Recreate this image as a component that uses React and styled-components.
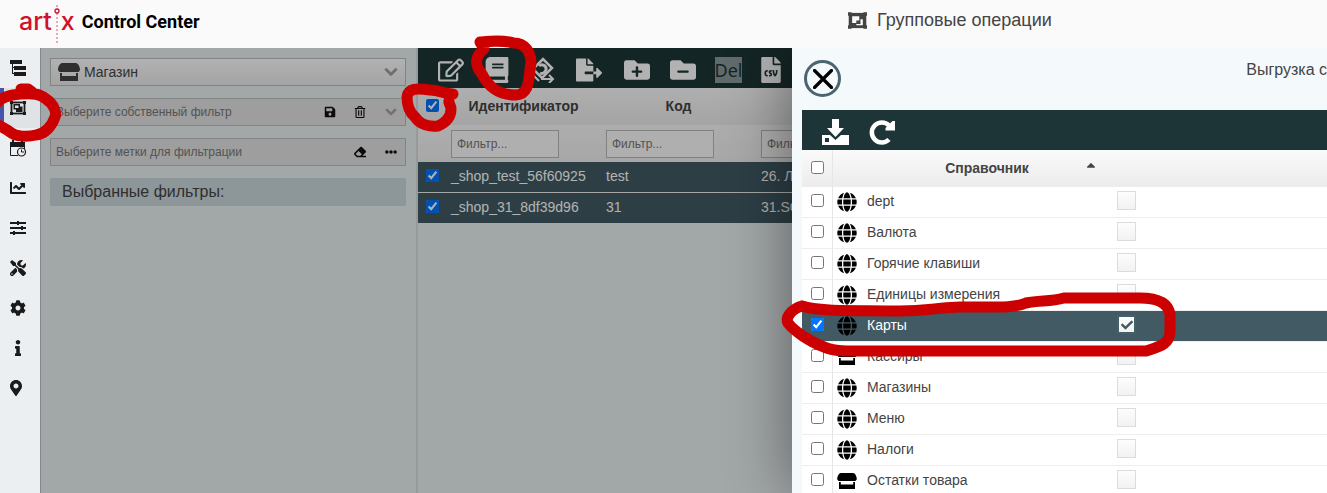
import React from "react";
import styled, { createGlobalStyle, css } from "styled-components";
import {
  FaChartLine, FaTools, FaCog, FaInfo, FaMapMarkerAlt, FaSave, FaRegTrashAlt, FaEraser, FaEllipsisH,
  FaRegEdit, FaBook, FaFileExport, FaFolderPlus, FaFolderMinus, FaFileCsv, FaChevronDown, FaGlobe,
  FaCheck, FaCaretUp,
} from "react-icons/fa";

const Global = createGlobalStyle`
  *, *::before, *::after { box-sizing: border-box; }
  body { margin: 0; overflow: hidden; font-family: "Liberation Sans", Arial, sans-serif; font-size: 14px; color: #444; }
  button, input, select { font: inherit; color: inherit; }
`;

/* ---------- icons ---------- */

const Tree = () => (
  <svg width="16" height="16" viewBox="0 0 16 16" aria-hidden="true">
    <path fill="#1a1a1a" d="M0 0h12v4H3v3h1V6h12v4H4V8H3v5h1v-1h12v4H4v-2H2V4H0z" />
  </svg>
);

const ObjectGroup = ({ size = 16, color = "#1a1a1a", hole = "#eceff1", solid }) => (
  <svg width={size} height={size - 2} viewBox="0 0 16 14" aria-hidden="true">
    <rect x="1.500" y="1.500" width="13" height="11" fill={solid ? color : "none"} stroke={color} strokeWidth="1.800" />
    <path fill={color} d="M0 0h3v3H0zM13 0h3v3h-3zM0 11h3v3H0zM13 11h3v3h-3z" />
    {solid ? (
      <path fill={hole} d="M3.500 3.500h6v3.500H7v2H3.500zM10.500 6h2v5H7v-1h3.500z" />
    ) : (
      <path fill={color} fillRule="evenodd" d="M3.500 3h6.500v2.500h2.500V11H6V8.500H3.500zM5 4.500V7h3.500V4.500z" />
    )}
  </svg>
);

const CalendarClock = () => (
  <svg width="16" height="17" viewBox="0 0 16 17" aria-hidden="true">
    <path fill="#1a1a1a" d="M0 2h2V0h2v2h7V0h2v2h2v5H0z" />
    <path fill="none" stroke="#1a1a1a" d="M.5 6v9.500H8M14.500 6v3" />
    <circle cx="11.500" cy="12" r="4" fill="#eceff1" stroke="#1a1a1a" strokeWidth="1.200" />
    <path fill="none" stroke="#1a1a1a" d="M11.500 9.500V12H14" />
  </svg>
);

const Sliders = () => (
  <svg width="16" height="14" viewBox="0 0 16 14" aria-hidden="true">
    <path stroke="#1a1a1a" strokeWidth="2" d="M0 2h16M0 7h16M0 12h16" />
    <path stroke="#1a1a1a" strokeWidth="2" d="M8 0v4M12 5v4M4 10v4" />
  </svg>
);

const Store = ({ width = 22, color = "#000" }) => (
  <svg width={width} height={Math.round(width * 0.82)} viewBox="0 0 22 18" aria-hidden="true">
    <path fill={color} d="M4 0h14c2 0 4 4 4 6.500a2.500 2.500 0 0 1-3 2.500H3A2.500 2.500 0 0 1 0 6.500C0 4 2 0 4 0z" />
    <path fill={color} d="M2 10h2v3h14v-3h2v8H2z" />
  </svg>
);

const MoneyTransfer = () => (
  <svg width="26" height="26" viewBox="0 0 26 26" fill="none" stroke="currentColor" aria-hidden="true">
    <path strokeWidth="2.500" d="M4 12 14 2l9 9-10 10z" />
    <path strokeWidth="3" d="M10 9c3-3 8 0 7 4-1 3-4 4-6 3" />
    <path strokeWidth="2" d="M2 6V2h4M12 22h12M20 18l4 4-4 4M2 16l8 8" />
  </svg>
);

const Download = () => (
  <svg width="27" height="26" viewBox="0 0 27 26" aria-hidden="true">
    <path fill="currentColor" fillRule="evenodd" d="M10 0h7v9h5l-8.500 9L5 9h5zM0 16h8l5.500 5 5.500-5h8v10H0zM3 19v4h4v-4z" />
  </svg>
);

const Reload = () => (
  <svg width="26" height="26" viewBox="0 0 26 26" aria-hidden="true">
    <path d="M20 20.500A10 10 0 1 1 20 6.500" fill="none" stroke="currentColor" strokeWidth="4.500" />
    <path fill="currentColor" d="M26 2v9.500H16.500V9l7-7z" />
  </svg>
);

const Cross = () => (
  <svg width="20" height="20" viewBox="0 0 20 20" aria-hidden="true">
    <path d="M1.500 1.500 18.500 18.500M18.500 1.500 1.500 18.500" stroke="#000" strokeWidth="3.200" strokeLinecap="round" />
  </svg>
);

const Chevron = () => <FaChevronDown stroke="currentColor" strokeWidth="36" />;

/* ---------- frame ---------- */

const Page = styled.div`
  display: flex;
  flex-direction: column;
  height: 100vh;
  overflow: hidden;
  background: #fafafa;
`;

const Header = styled.header`
  display: grid;
  grid-template-columns: 848px 1fr;
  align-items: center;
  height: 48px;
  flex: none;
`;

const Brand = styled.a`
  display: flex;
  align-items: center;
  height: 40px;
  padding-left: 19px;
  color: #d0112b;
  font: 500 25px/26px Inter, sans-serif;
  text-decoration: none;
`;

const LogoPart = styled.span`
  padding-bottom: 6px;
`;

const Product = styled.span`
  margin-left: 7px;
  padding-bottom: 4px;
  color: #000;
  font: bold 18px/24px Roboto, "Liberation Sans", sans-serif;
`;

const PageTitle = styled.h1`
  display: flex;
  align-items: center;
  gap: 10px;
  margin: 0 0 8px;
  font-size: 18px;
  font-weight: normal;
  white-space: nowrap;
`;

const Body = styled.div`
  display: flex;
  flex: 1;
  min-height: 0;
`;

const Sidebar = styled.nav`
  display: flex;
  flex-direction: column;
  width: 40px;
  flex: none;
  background: #eceff1;
`;

const NavButton = styled.button`
  display: flex;
  align-items: center;
  height: 40px;
  padding: 0 0 0 10px;
  border: 0;
  background: ${(p) => (p.$active ? "#e0e3e6" : "none")};
  box-shadow: ${(p) => (p.$active ? "inset 4px 0 #4653a6" : "none")};
  color: #1a1a1a;
  font-size: 16px;
`;

const PinIcon = styled(FaMapMarkerAlt)`
  width: 12px;
`;

const Content = styled.main`
  position: relative;
  display: flex;
  flex: 1;
  min-width: 0;
  overflow: hidden;
  background: #e9eff0;
  border-left: 1px solid #83878a;
`;

const Shade = styled.div`
  position: absolute;
  inset: 0;
  background: rgba(0, 0, 0, 0.3);
`;

/* ---------- filters ---------- */

const Filters = styled.section`
  display: flex;
  flex-direction: column;
  gap: 12px;
  width: 377px;
  flex: none;
  padding: 10px 10px 0 9px;
  border-right: 2px solid #d9dddf;
`;

const Field = styled.div`
  display: flex;
  align-items: center;
  gap: 4px;
  height: 28px;
  padding: 0 7px 0 ${(p) => (p.$main ? 7 : 5)}px;
  border: 1px solid #b9bcbd;
  background: ${(p) => (p.$main ? "linear-gradient(#fff, #ebebeb)" : "#e2e2e2")};
  font-size: ${(p) => (p.$main ? 14 : 12)}px;
`;

const bare = css`
  flex: 1;
  min-width: 0;
  padding: 0;
  border: 0;
  background: none;
  appearance: none;
`;
const Select = styled.select`${bare}`;
const FieldInput = styled.input`
  ${bare}
  &::placeholder { color: #777; opacity: 1; }
`;

const FieldButton = styled.button`
  display: flex;
  align-items: center;
  justify-content: center;
  width: 26px;
  padding: 0;
  border: 0;
  background: none;
  font-size: ${(p) => p.$size || 12}px;
  color: ${(p) => (p.$muted ? "#a0a0a0" : "#111")};
  &:last-child { width: 14px; margin-left: 7px; }
`;

const Chosen = styled.h2`
  margin: 0;
  padding-left: 12px;
  background: #cbd7db;
  font-size: 16px;
  font-weight: normal;
  line-height: 28px;
`;

/* ---------- tables ---------- */

const Grid = styled.section`
  flex: 1;
  min-width: 0;
`;

const Toolbar = styled.div`
  display: flex;
  align-items: center;
  gap: 19px;
  height: 40px;
  padding: ${(p) => (p.$drawer ? "4px 20px 0" : "4px 18px 0")};
  background: #1d3536;
  color: #fff;
`;

const Tool = styled.button`
  display: flex;
  align-items: center;
  justify-content: center;
  width: ${(p) => p.$width}px;
  height: 28px;
  flex: none;
  padding: 0;
  border: 0;
  background: none;
  svg { width: auto; height: 26px; flex: none; }
`;

const DelTool = styled(Tool)`
  height: 26px;
  background: #8c9a9b;
  color: #1d3536;
  font: 18px/26px "Noto Sans", sans-serif;
`;

const Table = styled.table`
  width: 100%;
  table-layout: fixed;
  border-collapse: separate;
  border-spacing: 0;
`;

const HeadRow = styled.tr`
  height: 37px;
  background: ${(p) => (p.$plain ? "linear-gradient(#f8f8f8, #f0f0f0)" : "linear-gradient(#fafafa, #ececec)")};
`;

const Th = styled.th`
  padding: 0 ${(p) => (p.$flush ? 0 : 5)}px ${(p) => (p.$filter ? 0 : 2)}px;
  text-align: center;
  font-size: 14px;
  overflow: hidden;
  ${(p) => p.$line && "border-right: 1px solid #e6e6e6;"}
`;

const Row = styled.tr`
  height: 31px;
  background: ${(p) => (p.$selected ? "#415a63" : "#fff")};
  color: ${(p) => (p.$selected ? "#fff" : "#444")};
`;

const Td = styled.td`
  padding: 0 0 ${(p) => (p.$raised ? 3 : 0)}px ${(p) => p.$left ?? 5}px;
  border-bottom: 1px solid #eee;
  overflow: hidden;
  white-space: nowrap;
  ${(p) => p.$line && "border-right: 1px solid #e6e6e6;"}
  svg { display: block; }
`;

const Check = styled.input`
  display: block;
  width: 13px;
  height: 13px;
  margin: 0 auto;
`;

const FilterInput = styled.input`
  display: block;
  width: 108px;
  height: 28px;
  padding: 0 5px;
  border: 1px solid #b9b9b9;
  background: #fbfbfb;
  font-size: 12px;
  font-weight: normal;
  &::placeholder { color: #777; opacity: 1; }
`;

/* ---------- drawer ---------- */

const Drawer = styled.aside`
  position: absolute;
  inset: 0 0 0 751px;
  padding-left: 10px;
  background: #f4f9fc;
  box-shadow: 0 0 60px rgba(0, 0, 0, 0.45);
`;

const DrawerHead = styled.div`
  display: flex;
  justify-content: space-between;
  align-items: flex-start;
  height: 62px;
  padding: 12px 0 0 2px;
`;

const Close = styled.button`
  display: flex;
  align-items: center;
  justify-content: center;
  width: 37px;
  height: 37px;
  padding: 0;
  border: 3px solid #4b656f;
  border-radius: 50%;
  background: none;
  svg { flex: none; }
`;

const DrawerTitle = styled.h2`
  margin: 0;
  font-size: 16px;
  font-weight: normal;
  line-height: 20px;
`;

const HeadLabel = styled.span`
  display: grid;
  grid-template-columns: 1fr auto 1fr;
  align-items: center;
  svg { justify-self: end; margin: 0 9px 5px 0; }
`;

const Flag = styled.label`
  display: grid;
  place-items: center;
  width: 19px;
  height: 19px;
  border: ${(p) => (p.$on ? "2px solid #46606a" : "1px solid #dcdcdc")};
  background: linear-gradient(#fdfdfd, #f2f2f2);
  font-size: 12px;
  color: #415a63;
  input { appearance: none; width: 100%; height: 100%; margin: 0; }
  input, svg { grid-area: 1 / 1; }
`;

const Marks = styled.svg`
  position: absolute;
  top: 0;
  left: 0;
  pointer-events: none;
`;

const nav = [
  ["Структура", <Tree />],
  ["Групповые операции", <ObjectGroup />],
  ["Расписание", <CalendarClock />],
  ["Отчёты", <FaChartLine />],
  ["Параметры", <Sliders />],
  ["Инструменты", <FaTools />],
  ["Настройки", <FaCog />],
  ["Информация", <FaInfo />],
  ["Карта", <PinIcon />],
];

const tools = [
  ["Изменить", 29, <FaRegEdit />],
  ["Справочники", 26, <FaBook />],
  ["Обмен", 26, <MoneyTransfer />],
  ["Экспорт", 30, <FaFileExport />],
  ["Добавить", 27, <FaFolderPlus />],
  ["Убрать", 27, <FaFolderMinus />],
];

const shops = [
  ["_shop_test_56f60925", "test", "26. Л"],
  ["_shop_31_8df39d96", "31", "31.SO"],
];

const books = [
  { name: "dept" },
  { name: "Валюта" },
  { name: "Горячие клавиши" },
  { name: "Единицы измерения" },
  { name: "Карты", on: true },
  { name: "Кассиры", store: true },
  { name: "Магазины" },
  { name: "Меню" },
  { name: "Налоги" },
  { name: "Остатки товара", store: true },
];

export default function App() {
  return (
    <Page>
      <Global />
      <Header>
        <Brand href="#">
          <LogoPart>art</LogoPart>
          <svg width="9" height="40" viewBox="0 0 9 40" aria-hidden="true">
            <path d="M5 1v38" stroke="#d0112b" strokeDasharray="2 2" strokeOpacity="0.7" />
            <circle cx="5" cy="7" r="2" fill="#fafafa" stroke="#d0112b" strokeWidth="1.300" />
          </svg>
          <LogoPart>x</LogoPart>
          <Product>Control Center</Product>
        </Brand>
        <PageTitle>
          <ObjectGroup size={19} color="#444" hole="#fafafa" solid />
          Групповые операции
        </PageTitle>
      </Header>
      <Body>
        <Sidebar>
          {nav.map(([label, icon], i) => (
            <NavButton key={label} aria-label={label} $active={i === 1}>{icon}</NavButton>
          ))}
        </Sidebar>
        <Content>
          <Filters>
            <Field $main>
              <Store width={22} color="#444" />
              <Select aria-label="Объект"><option>Магазин</option></Select>
              <FieldButton $muted $size={14} aria-label="Открыть"><Chevron /></FieldButton>
            </Field>
            <Field>
              <FieldInput aria-label="Собственный фильтр" placeholder="Выберите собственный фильтр" />
              <FieldButton aria-label="Сохранить"><FaSave /></FieldButton>
              <FieldButton aria-label="Удалить"><FaRegTrashAlt /></FieldButton>
              <FieldButton $muted aria-label="Открыть"><Chevron /></FieldButton>
            </Field>
            <Field>
              <FieldInput aria-label="Метки" placeholder="Выберите метки для фильтрации" />
              <FieldButton aria-label="Очистить"><FaEraser /></FieldButton>
              <FieldButton aria-label="Ещё"><FaEllipsisH /></FieldButton>
            </Field>
            <Chosen>Выбранные фильтры:</Chosen>
          </Filters>
          <Grid>
            <Toolbar>
              {tools.map(([label, width, icon]) => (
                <Tool key={label} aria-label={label} $width={width}>{icon}</Tool>
              ))}
              <DelTool $width={27}>Del</DelTool>
              <Tool aria-label="CSV" $width={20}><FaFileCsv /></Tool>
            </Toolbar>
            <Table>
              <colgroup>
                <col width="28" /><col width="155" /><col width="155" /><col />
              </colgroup>
              <thead>
                <HeadRow>
                  <Th $flush><Check type="checkbox" defaultChecked aria-label="Выбрать все" /></Th>
                  <Th>Идентификатор</Th>
                  <Th>Код</Th>
                  <Th />
                </HeadRow>
                <HeadRow $plain>
                  <Th />
                  {["Идентификатор", "Код", "Название"].map((n) => (
                    <Th key={n} $filter><FilterInput aria-label={n} placeholder="Фильтр..." /></Th>
                  ))}
                </HeadRow>
              </thead>
              <tbody>
                {shops.map(([id, code, title]) => (
                  <Row key={id} $selected>
                    <Td $left={0} $raised><Check type="checkbox" defaultChecked aria-label={id} /></Td>
                    <Td $raised>{id}</Td>
                    <Td $raised>{code}</Td>
                    <Td $raised>{title}</Td>
                  </Row>
                ))}
              </tbody>
            </Table>
          </Grid>
          <Shade />
          <Drawer>
            <DrawerHead>
              <Close aria-label="Закрыть"><Cross /></Close>
              <DrawerTitle>Выгрузка с</DrawerTitle>
            </DrawerHead>
            <Toolbar $drawer>
              <Tool aria-label="Выгрузить" $width={27}><Download /></Tool>
              <Tool aria-label="Обновить" $width={27}><Reload /></Tool>
            </Toolbar>
            <Table>
              <colgroup>
                <col width="31" /><col width="29" /><col width="250" /><col />
              </colgroup>
              <thead>
                <HeadRow>
                  <Th $flush $line><Check type="checkbox" aria-label="Выбрать все" /></Th>
                  <Th />
                  <Th><HeadLabel><span />Справочник<FaCaretUp /></HeadLabel></Th>
                  <Th />
                </HeadRow>
              </thead>
              <tbody>
                {books.map((b) => (
                  <Row key={b.name} $selected={b.on}>
                    <Td $left={0} $line={!b.on} $raised><Check type="checkbox" defaultChecked={b.on} aria-label={b.name} /></Td>
                    <Td $left={4}>{b.store ? <Store width={20} /> : <FaGlobe size={20} color="#000" />}</Td>
                    <Td $raised>{b.name}</Td>
                    <Td $raised>
                      <Flag $on={b.on}>
                        <input type="checkbox" defaultChecked={b.on} aria-label={`${b.name}: полностью`} />
                        {b.on && <FaCheck />}
                      </Flag>
                    </Td>
                  </Row>
                ))}
              </tbody>
            </Table>
          </Drawer>
        </Content>
      </Body>
      <Marks width="1200" height="370" fill="none" stroke="#cc0000" strokeWidth="11" strokeLinecap="round" strokeLinejoin="round" aria-hidden="true">
        <path d="M-4 104C0 97 10 95 20 94C34 93 40 94 46 99C54 104 57 113 55 117C52 126 45 134 36 135C28 137 16 137 10 132C6 129 2 127-4 124M21 89L28 89L32 92" />
        <path d="M480 42L484 49C474 57 475 66 482 74C488 86 497 95 516 95C531 94 528 77 531 63C531 52 525 43 514 43C502 40 492 41 480 42" />
        <path d="M453 94C443 94 440 90 430 90C417 88 408 88 407 97C407 106 409 112 415 117C420 125 430 127 438 126C447 122 451 116 451 109C451 105 448 103 449 101" />
        <path d="M802 306C792 309 785 317 788 323C794 331 810 342 824 347C834 352 850 351 900 351H1146C1158 347 1170 345 1170 331V314C1168 303 1158 298 1140 298H1064C1050 302 1040 300 1026 303C1014 308 1000 307 960 307C930 308 930 311 900 311C860 310 820 312 802 306" />
      </Marks>
    </Page>
  );
}
